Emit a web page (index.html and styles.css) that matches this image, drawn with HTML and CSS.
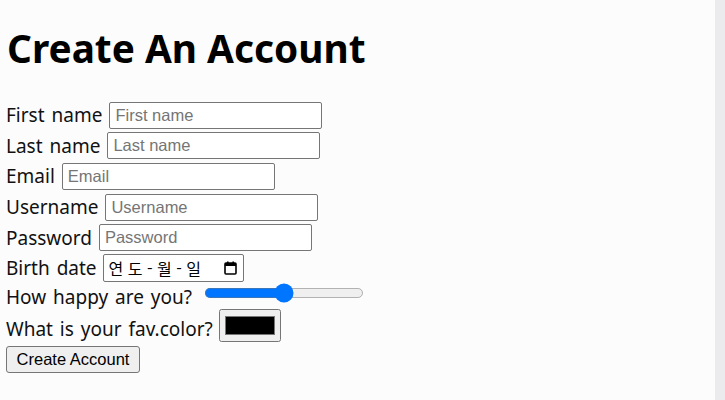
FILE: index.html
```html
<!DOCTYPE html>
<html lang="ko">
<head>
<meta charset="utf-8">
<title>Create An Account</title>
<link rel="stylesheet" href="styles.css">
</head>
<body>
<main class="page">
  <h1 class="title">Create An Account</h1>
  <form class="form">
    <div class="row"><label class="label" for="fn">First name</label><input class="text" id="fn" type="text" placeholder="First name"></div>
    <div class="row"><label class="label" for="ln">Last name</label><input class="text" id="ln" type="text" placeholder="Last name"></div>
    <div class="row"><label class="label" for="em">Email</label><input class="text" id="em" type="email" placeholder="Email"></div>
    <div class="row"><label class="label" for="un">Username</label><input class="text" id="un" type="text" placeholder="Username"></div>
    <div class="row"><label class="label" for="pw">Password</label><input class="text" id="pw" type="password" placeholder="Password"></div>
    <div class="row"><label class="label">Birth date</label>
      <div class="date"><span class="date-text">연 도 - 월 - 일</span>
        <svg class="cal" width="13" height="14" viewBox="0 0 13 14"><rect x="1" y="2" width="11" height="11" rx="1" fill="none" stroke="#000" stroke-width="1.6"/><rect x="1" y="2" width="11" height="3" fill="#000"/><rect x="3" y="0.5" width="1.6" height="2.5" fill="#000"/><rect x="8.4" y="0.5" width="1.6" height="2.5" fill="#000"/></svg>
      </div>
    </div>
    <div class="row row-range"><label class="label label-range" for="hp">How happy are you?</label><input class="range" id="hp" type="range" min="0" max="100" value="50"></div>
    <div class="row row-color"><label class="label label-color" for="fc">What is your fav.color?</label><input class="color" id="fc" type="color" value="#000000"></div>
    <div class="row row-btn"><button class="btn" type="button">Create Account</button></div>
  </form>
</main>
</body>
</html>
```

FILE: styles.css
```css
html {
  background: #ebebed;
  margin: 0;
}
body {
  margin: 0;
}
.page {
  width: 715px;
  height: 400px;
  box-sizing: border-box;
  padding: 0 6px;
  background: #fcfcfc;
  font-family: "Noto Sans", "Noto Sans CJK KR", sans-serif;
  color: #000;
}
.title {
  margin: 0;
  height: 100px;
  box-sizing: border-box;
  padding-top: 18px;
  font-size: 38.8px;
  line-height: 60px;
  font-weight: 700;
  padding-left: 1px;
}
.form {
  display: flex;
  flex-direction: column;
}
.row {
  display: flex;
  align-items: center;
  gap: 7px;
  height: 30.6px;
}
.label {
  font-size: 19px;
  line-height: 26px;
  word-spacing: 2px;
  color: #111;
}
.text {
  width: 213px;
  height: 27px;
  box-sizing: border-box;
  border: 1px solid #767676;
  border-radius: 2px;
  padding: 0 5px;
  font-family: "Liberation Sans", Arial, sans-serif;
  font-size: 16.5px;
  background: #fff;
  margin: 0;
}
.text::placeholder {
  color: #757575;
}
.date {
  width: 141px;
  height: 28px;
  box-sizing: border-box;
  border: 1px solid #767676;
  border-radius: 2px;
  background: #fff;
  display: flex;
  align-items: center;
  justify-content: space-between;
  padding: 0 6px 0 5px;
  margin-left: -1px;
}
.date-text {
  font-family: "Noto Sans CJK KR", sans-serif;
  font-size: 16px;
  letter-spacing: 0;
}
.row-range {
  height: 18px;
  gap: 12px;
}
.label-range {
  padding-top: 8px;
}
.range {
  width: 128px;
  margin: 0;
  zoom: 1.25;
}
.row-color {
  height: 34px;
  margin-top: 7px;
}
.label-color {
  padding-top: 6px;
}
.color {
  zoom: 1.25;
  margin: 0 0 0 -1px;
}
.row-btn {
  height: 28px;
  margin-top: 3px;
}
.btn {
  width: 134px;
  height: 27px;
  box-sizing: border-box;
  background: #efefef;
  border: 1px solid #767676;
  border-radius: 3px;
  font-family: "Liberation Sans", Arial, sans-serif;
  font-size: 16.5px;
  color: #000;
  padding: 0;
}
```
